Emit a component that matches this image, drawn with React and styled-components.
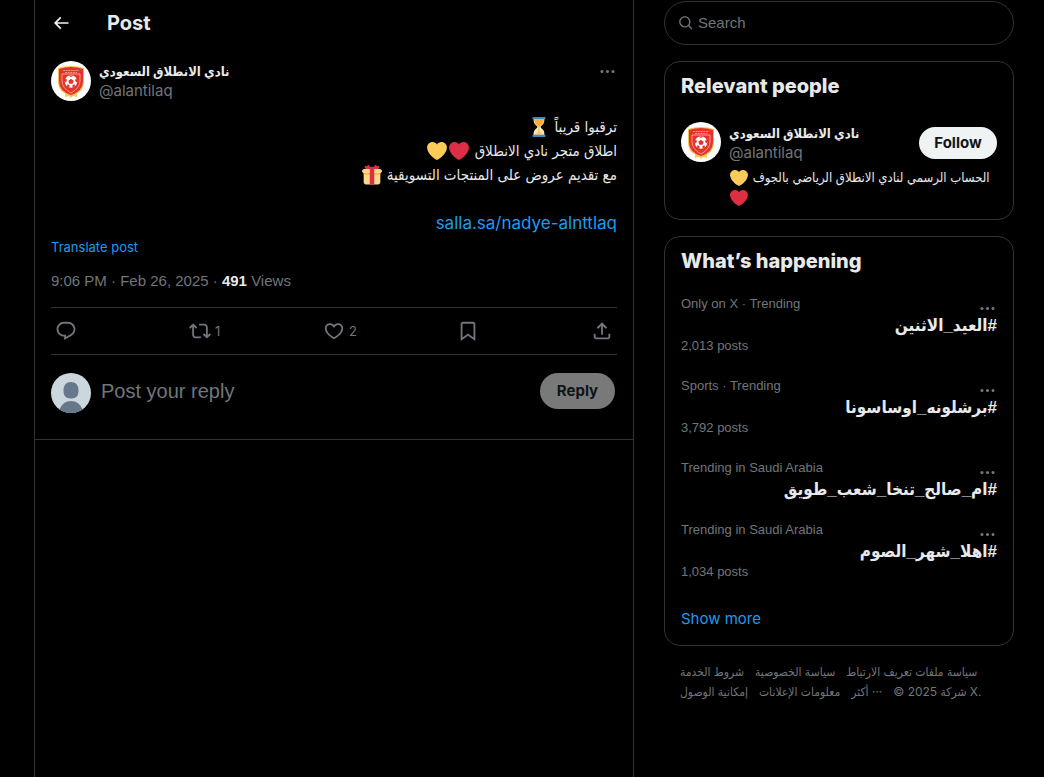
import React from "react";
import styled, { createGlobalStyle } from "styled-components";

const Global = createGlobalStyle`
  *, *::before, *::after { box-sizing: border-box; }
  body {
    margin: 0;
    background: #000;
    color: #e7e9ea;
    font-family: Inter, "DejaVu Sans Condensed", "DejaVu Sans", sans-serif;
    font-size: 15px;
    line-height: 20px;
  }
  button, input { font: inherit; color: inherit; }
  a { color: inherit; text-decoration: none; }
  h1, h2, p { margin: 0; }
`;

const SECONDARY_FONT = `"Liberation Sans", "DejaVu Sans Condensed", sans-serif`;

const Page = styled.div`
  display: flex;
  gap: 30px;
  padding: 0 30px 0 34px;
  min-height: 100vh;
`;

const Timeline = styled.main`
  flex: 1 1 600px;
  min-width: 0;
  border: solid #2f3336;
  border-width: 0 1px;
`;

const Sidebar = styled.aside`
  flex: 0 0 350px;
  min-width: 0;
  padding-top: 1px;
`;

const Glyph = styled.svg`
  display: block;
  flex: none;
  width: ${(p) => p.$size}px;
  height: ${(p) => p.$size}px;
  fill: currentColor;
`;

const Icon = ({ d, size }) => (
  <Glyph viewBox="0 0 24 24" $size={size} aria-hidden="true">
    <path d={d} />
  </Glyph>
);

const ICONS = {
  back: "M7.414 13l5.043 5.04-1.414 1.42L3.586 12l7.457-7.46 1.414 1.42L7.414 11H21v2H7.414z",
  more: "M3 12c0-1.1.9-2 2-2s2 .9 2 2-.9 2-2 2-2-.9-2-2zm9 2c1.1 0 2-.9 2-2s-.9-2-2-2-2 .9-2 2 .9 2 2 2zm7 0c1.1 0 2-.9 2-2s-.9-2-2-2-2 .9-2 2 .9 2 2 2z",
  reply: "M1.751 10c0-4.42 3.584-8 8.005-8h4.366c4.49 0 8.129 3.64 8.129 8.13 0 2.96-1.607 5.68-4.196 7.11l-8.054 4.46v-3.69h-.067c-4.49.1-8.183-3.51-8.183-8.01zm8.005-6c-3.317 0-6.005 2.69-6.005 6 0 3.37 2.77 6.08 6.138 6.01l.351-.01h1.761v2.3l5.087-2.81c1.951-1.08 3.163-3.13 3.163-5.36 0-3.39-2.744-6.13-6.129-6.13H9.756z",
  repost: "M4.5 3.88l4.432 4.14-1.364 1.46L5.5 7.55V16c0 1.1.896 2 2 2H13v2H7.5c-2.209 0-4-1.79-4-4V7.55L1.432 9.48.068 8.02 4.5 3.88zM16.5 6H11V4h5.5c2.209 0 4 1.79 4 4v8.45l2.068-1.93 1.364 1.46-4.432 4.14-4.432-4.14 1.364-1.46 2.068 1.93V8c0-1.1-.896-2-2-2z",
  like: "M16.697 5.5c-1.222-.06-2.679.51-3.89 2.16l-.805 1.09-.806-1.09C9.984 6.01 8.526 5.44 7.304 5.5c-1.243.07-2.349.78-2.91 1.91-.552 1.12-.633 2.78.479 4.82 1.074 1.97 3.257 4.27 7.129 6.61 3.87-2.34 6.052-4.64 7.126-6.61 1.111-2.04 1.03-3.7.477-4.82-.561-1.13-1.666-1.84-2.908-1.91zm4.187 7.69c-1.351 2.48-4.001 5.12-8.379 7.67l-.503.3-.504-.3c-4.379-2.55-7.029-5.19-8.382-7.67-1.36-2.5-1.41-4.86-.514-6.67.887-1.79 2.647-2.91 4.601-3.01 1.651-.09 3.368.56 4.798 2.01 1.429-1.45 3.146-2.1 4.796-2.01 1.954.1 3.714 1.22 4.601 3.01.896 1.81.846 4.17-.514 6.67z",
  bookmark: "M4 4.5C4 3.12 5.119 2 6.5 2h11C18.881 2 20 3.12 20 4.5v18.44l-8-5.71-8 5.71V4.5zM6.5 4c-.276 0-.5.22-.5.5v14.56l6-4.29 6 4.29V4.5c0-.28-.224-.5-.5-.5h-11z",
  share: "M12 2.59l5.7 5.7-1.41 1.42L13 6.41V16h-2V6.41l-3.3 3.3-1.41-1.42L12 2.59zM21 15l-.02 3.51c0 1.38-1.12 2.49-2.5 2.49H5.5C4.11 21 3 19.88 3 18.5V15h2v3.5c0 .28.22.5.5.5h12.98c.28 0 .5-.22.5-.5L19 15h2z",
  search: "M10.25 3.75c-3.59 0-6.5 2.91-6.5 6.5s2.91 6.5 6.5 6.5c1.795 0 3.419-.726 4.596-1.904 1.178-1.177 1.904-2.801 1.904-4.596 0-3.59-2.91-6.5-6.5-6.5zm-8.5 6.5c0-4.694 3.806-8.5 8.5-8.5s8.5 3.806 8.5 8.5c0 1.986-.682 3.815-1.824 5.262l4.781 4.781-1.414 1.414-4.781-4.781c-1.447 1.142-3.276 1.824-5.262 1.824-4.694 0-8.5-3.806-8.5-8.5z",
};

const Emoji = styled.svg`
  display: inline-block;
  width: ${(p) => p.$size}px;
  height: ${(p) => p.$size}px;
  margin: 0 1px;
  vertical-align: -5px;
`;

const Heart = ({ color, label, size = 20 }) => (
  <Emoji viewBox="0 0 36 36" $size={size} role="img" aria-label={label}>
    <path
      fill={color}
      d="M35.885 11.833c0-5.45-4.418-9.868-9.867-9.868-3.308 0-6.227 1.633-8.018 4.129-1.791-2.496-4.71-4.129-8.017-4.129-5.45 0-9.868 4.417-9.868 9.868 0 .772.098 1.52.266 2.241C1.751 22.587 11.216 31.568 18 34.034c6.783-2.466 16.249-11.447 17.617-19.959.17-.721.268-1.469.268-2.242z"
    />
  </Emoji>
);

const Hourglass = () => (
  <Emoji viewBox="0 0 36 36" $size={20} role="img" aria-label="hourglass">
    <path fill="#FFE8B6" d="M21 18c0-2.001 3.246-3.369 5-6 2-3 2-10 2-10H8s0 7 2 10c1.754 2.631 5 3.999 5 6s-3.246 3.369-5 6c-2 3-2 10-2 10h20s0-7-2-10c-1.754-2.631-5-3.999-5-6z" />
    <path fill="#FFAC33" d="M18 34h9c0-2-3-6-9-9-6 3-9 7-9 9z" opacity=".35" />
    <path fill="#FFAC33" d="M17.200 18h1.600v14h-1.600z" />
    <path fill="#FFAC33" d="M9.500 4.500h17c0 3-.7 5.500-2.200 7.500-1.600 2.200-4.800 3.500-5.500 6.500h-1.600c-.7-3-3.900-4.300-5.500-6.500-1.500-2-2.200-4.500-2.200-7.500z" />
    <path fill="#3B88C3" d="M30 34a2 2 0 0 1-2 2H8a2 2 0 0 1 0-4h20a2 2 0 0 1 2 2zm0-32a2 2 0 0 1-2 2H8a2 2 0 0 1 0-4h20a2 2 0 0 1 2 2z" />
  </Emoji>
);

const Gift = () => (
  <Emoji viewBox="0 0 36 36" $size={20} role="img" aria-label="gift">
    <path fill="#FDD888" d="M33 31c0 2.200-1.800 4-4 4H7c-2.200 0-4-1.800-4-4V14c0-2.200 1.800-4 4-4h22c2.200 0 4 1.800 4 4v17z" />
    <path fill="#FDD888" d="M36 11c0 2.200-1.800 4-4 4H4c-2.200 0-4-1.800-4-4s1.800-4 4-4h28c2.200 0 4 1.800 4 4z" />
    <path fill="#FCAB40" d="M3 15h30v2H3z" />
    <path fill="#DA2F47" d="M19 3h-2c-1.700 0-3 1.300-3 3v29h8V6c0-1.700-1.300-3-3-3z" />
    <path fill="#DA2F47" d="M16 7c1.100 0 1.300-.700.500-1.600l-4-4.800c-.800-.900-2-.800-2.600.200L9.600 1.200c-.600 1-1.900 1.300-2.800.700l-.500-.300C5.300 1 4.700 1.400 4.800 2.500l.3 2.500C5.200 6.100 6.200 7 7.300 7H16zm4 0c-1.100 0-1.300-.700-.500-1.600l4-4.800c.800-.900 2-.800 2.600.200l.3.400c.6 1 1.900 1.300 2.800.700l.5-.3c1-.600 1.600-.200 1.500.900L30.900 5C30.800 6.100 29.800 7 28.700 7H20z" />
  </Emoji>
);

const AvatarSvg = styled.svg`
  display: block;
  flex: none;
  width: 40px;
  height: 40px;
  border-radius: 50%;
`;

const ClubAvatar = () => (
  <AvatarSvg viewBox="0 0 40 40" role="img" aria-label="alantilaq">
    <rect width="40" height="40" fill="#fff" />
    <path d="M9 29l5 3 0 4 4-1 2 2 2-2 4 1 0-4 5-3-2-2H11z" fill="#f6cf55" />
    <path d="M7 7q13-4 26 0v13q0 11-13 15Q7 31 7 20z" fill="#f3bf4d" />
    <path d="M8 8q12-4 24 0v12q0 10-12 14Q8 30 8 20z" fill="#e5322b" />
    <path d="M11 13h18v7q0 7-9 12-9-5-9-12z" fill="none" stroke="#f9b8a8" strokeWidth=".8" />
    <path d="M12 9.500h16M14 11.500h12" stroke="#f7a79b" strokeWidth=".8" strokeDasharray="2 .6" />
    <circle cx="20" cy="20.500" r="6.200" fill="#fff" />
    <path d="M20 17.700l2.700 2-1 3.100h-3.400l-1-3.100z" fill="#e5322b" />
    <path d="M17.500 14.600l2.500 1.300 2.500-1.300zM13.900 18l2.200.4-.9 2.700-1.500.2zM26.100 18l-2.200.4.9 2.700 1.500.2zM15.800 25.500l.9-2.400 2 1.500-.5 2zM24.200 25.500l-.9-2.400-2 1.500.5 2z" fill="#e5322b" />
  </AvatarSvg>
);

const DefaultAvatar = () => (
  <AvatarSvg viewBox="0 0 40 40" role="img" aria-label="Your profile">
    <rect width="40" height="40" fill="#ccd6dd" />
    <path d="M20 9c4.800 0 7.500 3.200 7.500 8.500 0 5-2 8-7.500 8s-7.500-3-7.500-8C12.500 12.200 15.200 9 20 9z" fill="#66788a" />
    <path d="M7.500 40c1.500-7.500 6-12 12.500-12s11 4.500 12.500 12z" fill="#66788a" />
  </AvatarSvg>
);

const Header = styled.header`
  display: flex;
  align-items: center;
  gap: 36px;
  height: 46px;
  padding: 0 16px;
`;

const Title = styled.h1`
  font-size: 20px;
  line-height: 24px;
  font-weight: 700;
`;

const IconButton = styled.button`
  display: flex;
  align-items: center;
  gap: 4px;
  min-height: 20px;
  padding: 0;
  border: 0;
  background: none;
  color: ${(p) => p.$color || "#71767b"};
  font-size: 13px;
  cursor: pointer;
`;

const Article = styled.article`
  padding: 15px 16px 0;
`;

const AuthorRow = styled.div`
  display: flex;
  align-items: flex-start;
  gap: 8px;
`;

const Identity = styled.div`
  flex: 1;
  min-width: 0;
`;

const Name = styled.a`
  display: block;
  font-size: 13px;
  font-weight: 700;
  text-align: left;
`;

const Handle = styled.a`
  display: block;
  color: #71767b;
`;

const PostText = styled.div`
  margin-top: 14px;
  font-size: 15px;
  line-height: 24px;
`;

const Link = styled.a`
  display: block;
  color: #1d9bf0;
  font-size: 17px;
  text-align: right;
`;

const Translate = styled.button`
  display: block;
  margin-top: 2px;
  padding: 0;
  border: 0;
  background: none;
  color: #1d9bf0;
  font-size: 13px;
  cursor: pointer;
`;

const Meta = styled.p`
  margin: 14px 0 16px;
  color: #71767b;
  font-family: ${SECONDARY_FONT};

  strong { color: #e7e9ea; font-weight: 700; }
`;

const Actions = styled.div`
  display: flex;
  align-items: center;
  height: 48px;
  padding: 0 4px;
  border: solid #2f3336;
  border-width: 1px 0;
`;

const Action = styled.div`
  flex: ${(p) => (p.$last ? "none" : "1 1 0")};
`;

const Composer = styled.form`
  display: flex;
  align-items: flex-start;
  gap: 10px;
  padding: 18px 18px 26px 16px;
  border-bottom: 1px solid #2f3336;
`;

const ReplyInput = styled.input`
  flex: 1;
  min-width: 0;
  height: 36px;
  padding: 0;
  border: 0;
  outline: 0;
  background: none;
  font-family: ${SECONDARY_FONT};
  font-size: 20px;

  &::placeholder { color: #71767b; opacity: 1; }
`;

const Pill = styled.button`
  flex: none;
  width: ${(p) => p.$width}px;
  height: ${(p) => p.$height}px;
  padding: 0;
  border: 0;
  border-radius: 18px;
  background: ${(p) => p.$bg};
  color: #0f1419;
  font-weight: 700;
  text-align: center;
`;

const SearchBox = styled.label`
  display: flex;
  align-items: center;
  gap: 4px;
  height: 44px;
  padding: 0 13px;
  border: 1px solid #2f3336;
  border-radius: 22px;
  color: #71767b;

  input {
    flex: 1;
    min-width: 0;
    padding: 0;
    border: 0;
    outline: 0;
    background: none;
    font-family: ${SECONDARY_FONT};
  }
  input::placeholder { color: #71767b; opacity: 1; }
`;

const Card = styled.section`
  margin-top: 16px;
  padding: 12px 16px;
  border: 1px solid #2f3336;
  border-radius: 16px;
`;

const CardTitle = styled.h2`
  font-size: 20px;
  line-height: 24px;
  font-weight: 800;
`;

const Person = styled.div`
  display: flex;
  gap: 8px;
  margin-top: 24px;
`;

const PersonTop = styled.div`
  display: flex;
  align-items: center;
  height: 42px;
`;

const Bio = styled.p`
  margin-top: 3px;
  font-size: 13px;
  text-align: left;
`;

const TrendList = styled.div`
  margin-top: 11px;
`;

const Trend = styled.div`
  padding: 10px 0;
  color: #71767b;
  font-family: ${SECONDARY_FONT};
  font-size: 13px;
`;

const TrendTop = styled.div`
  display: flex;
  justify-content: space-between;
  align-items: flex-start;
  height: 20px;

  button { height: 28px; }
`;

const Tag = styled.a`
  display: block;
  margin-top: 2px;
  color: #e7e9ea;
  font-size: 17px;
  font-weight: 700;
`;

const ShowMore = styled.a`
  display: block;
  padding: 17px 0 4px;
  color: #1d9bf0;
`;

const Footer = styled.footer`
  padding: 16px;
  color: #71767b;
  font-size: 12px;
`;

const FooterRow = styled.div`
  display: flex;
  gap: 11px;
  white-space: nowrap;
`;

const TRENDS = [
  { label: "Only on X · Trending", tag: "#العيد_الاثنين", posts: "2,013 posts" },
  { label: "Sports · Trending", tag: "#برشلونه_اوساسونا", posts: "3,792 posts" },
  { label: "Trending in Saudi Arabia", tag: "#ام_صالح_تنخا_شعب_طويق" },
  { label: "Trending in Saudi Arabia", tag: "#اهلا_شهر_الصوم", posts: "1,034 posts" },
];

const ACTIONS = [
  { icon: "reply", label: "Reply" },
  { icon: "repost", label: "Repost", count: 1 },
  { icon: "like", label: "Like", count: 2 },
  { icon: "bookmark", label: "Bookmark" },
  { icon: "share", label: "Share" },
];

export default function App() {
  return (
    <>
      <Global />
      <Page>
        <Timeline>
          <Header>
            <IconButton aria-label="Back" $color="#eff3f4">
              <Icon d={ICONS.back} size={20} />
            </IconButton>
            <Title>Post</Title>
          </Header>

          <Article>
            <AuthorRow>
              <ClubAvatar />
              <Identity>
                <Name href="#profile">نادي الانطلاق السعودي</Name>
                <Handle href="#profile">@alantilaq</Handle>
              </Identity>
              <IconButton aria-label="More">
                <Icon d={ICONS.more} size={19} />
              </IconButton>
            </AuthorRow>

            <PostText dir="rtl" lang="ar">
              ترقبوا قريباً <Hourglass />
              <br />
              اطلاق متجر نادي الانطلاق <Heart color="#dd2e44" label="red heart" />
              <Heart color="#fdcb58" label="yellow heart" />
              <br />
              مع تقديم عروض على المنتجات التسويقية <Gift />
              <br />
              <br />
              <Link href="#salla" dir="ltr">salla.sa/nadye-alnttlaq</Link>
            </PostText>
            <Translate>Translate post</Translate>
            <Meta>
              9:06 PM · Feb 26, 2025 · <strong>491</strong> Views
            </Meta>

            <Actions>
              {ACTIONS.map((a, i) => (
                <Action key={a.icon} $last={i === ACTIONS.length - 1}>
                  <IconButton aria-label={a.label}>
                    <Icon d={ICONS[a.icon]} size={22} />
                    {a.count}
                  </IconButton>
                </Action>
              ))}
            </Actions>
          </Article>

          <Composer onSubmit={(e) => e.preventDefault()}>
            <DefaultAvatar />
            <ReplyInput aria-label="Post your reply" placeholder="Post your reply" />
            <Pill $width={75} $height={36} $bg="#787a7a">Reply</Pill>
          </Composer>
        </Timeline>

        <Sidebar>
          <SearchBox>
            <Icon d={ICONS.search} size={16} />
            <input aria-label="Search" placeholder="Search" />
          </SearchBox>

          <Card>
            <CardTitle>Relevant people</CardTitle>
            <Person>
              <ClubAvatar />
              <Identity>
                <PersonTop>
                  <Identity>
                    <Name href="#profile">نادي الانطلاق السعودي</Name>
                    <Handle href="#profile">@alantilaq</Handle>
                  </Identity>
                  <Pill $width={78} $height={32} $bg="#eff3f4">Follow</Pill>
                </PersonTop>
                <Bio dir="rtl" lang="ar">
                  الحساب الرسمي لنادي الانطلاق الرياضي بالجوف{" "}
                  <Heart color="#fdcb58" label="yellow heart" size={18} />
                  <br />
                  <Heart color="#dd2e44" label="red heart" size={18} />
                </Bio>
              </Identity>
            </Person>
          </Card>

          <Card>
            <CardTitle>What’s happening</CardTitle>
            <TrendList>
              {TRENDS.map((t) => (
                <Trend key={t.tag}>
                  <TrendTop>
                    <span>{t.label}</span>
                    <IconButton aria-label="More">
                      <Icon d={ICONS.more} size={19} />
                    </IconButton>
                  </TrendTop>
                  <Tag href="#trend" dir="rtl" lang="ar">{t.tag}</Tag>
                  {t.posts && <div>{t.posts}</div>}
                </Trend>
              ))}
            </TrendList>
            <ShowMore href="#more">Show more</ShowMore>
          </Card>

          <Footer>
            <FooterRow>
              <a href="#terms">شروط الخدمة</a>
              <a href="#privacy">سياسة الخصوصية</a>
              <a href="#cookies">سياسة ملفات تعريف الارتباط</a>
            </FooterRow>
            <FooterRow>
              <a href="#accessibility">إمكانية الوصول</a>
              <a href="#ads">معلومات الإعلانات</a>
              <a href="#more" dir="ltr">أكثر ···</a>
              <span>© 2025 شركة X.</span>
            </FooterRow>
          </Footer>
        </Sidebar>
      </Page>
    </>
  );
}
